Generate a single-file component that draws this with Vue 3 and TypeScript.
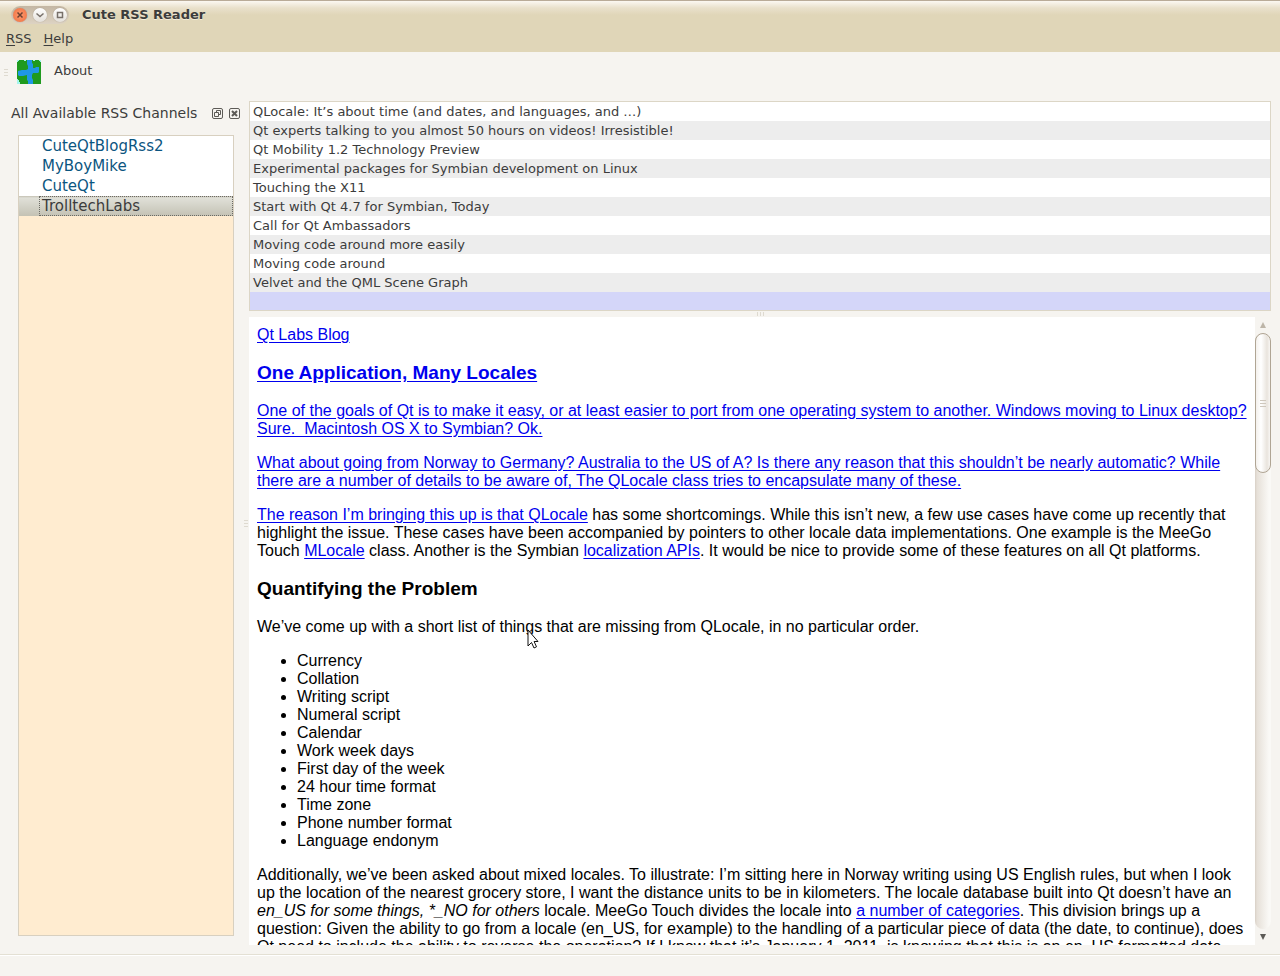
<script setup lang="ts">
import { ref } from 'vue'

const channels: string[] = ['CuteQtBlogRss2', 'MyBoyMike', 'CuteQt', 'TrolltechLabs']
const selectedChannel = ref<string>('TrolltechLabs')

const headlines: string[] = [
  'QLocale: It’s about time (and dates, and languages, and …)',
  'Qt experts talking to you almost 50 hours on videos! Irresistible!',
  'Qt Mobility 1.2 Technology Preview',
  'Experimental packages for Symbian development on Linux',
  'Touching the X11',
  'Start with Qt 4.7 for Symbian, Today',
  'Call for Qt Ambassadors',
  'Moving code around more easily',
  'Moving code around',
  'Velvet and the QML Scene Graph',
]

const missing: string[] = [
  'Currency',
  'Collation',
  'Writing script',
  'Numeral script',
  'Calendar',
  'Work week days',
  'First day of the week',
  '24 hour time format',
  'Time zone',
  'Phone number format',
  'Language endonym',
]
</script>

<template>
  <div class="window">
    <header class="titlebar">
      <div class="controls">
        <button class="control close" aria-label="Close">
          <svg viewBox="0 0 14 14"><path d="M4.500 4.500l5 5M9.500 4.500l-5 5" /></svg>
        </button>
        <button class="control" aria-label="Minimize">
          <svg viewBox="0 0 14 14"><path d="M3.500 5.500L7 8.500l3.500-3" /></svg>
        </button>
        <button class="control" aria-label="Maximize">
          <svg viewBox="0 0 14 14"><path d="M4.500 4.500h5v5h-5z" /></svg>
        </button>
      </div>
      <h1 class="title">Cute RSS Reader</h1>
    </header>

    <nav class="menubar">
      <button class="menu"><u>R</u>SS</button>
      <button class="menu"><u>H</u>elp</button>
    </nav>

    <div class="toolbar">
      <span class="grip rows"><i></i><i></i><i></i></span>
      <button class="tool">
        <svg class="logo" viewBox="0 0 24 24" aria-hidden="true">
          <path fill="#1f9a1f" d="M0 0h24v24H0z" />
          <path fill="#a5f5ec" d="M0 0h2v1H1v1H0zM7 0h2v1H7zM16 0h2v1h-2zM22 0h2v2h-1V1h-1zM0 19h1v1h1v2h1v2H0z" />
          <path fill="#1f97e6" d="M10 0h5v3l1 1v4h2l1-1h3v5l-1 1h-5l-1 2v3l1 2v4h-5v-3l-1-1v-5l-4 1H2l-1-1v-4l4-1h4l2-1V6l-1-2z" />
        </svg>
        <span>About</span>
      </button>
    </div>

    <main class="workspace">
      <aside class="dock">
        <div class="dock-head">
          <h2 class="dock-title">All Available RSS Channels</h2>
          <button class="dock-button" aria-label="Float">
            <svg viewBox="0 0 11 11">
              <rect x="0.500" y="0.500" width="10" height="10" rx="1.500" />
              <path d="M4.500 4.500v-2h4v4h-2M2.500 4.500h4v4h-4z" />
            </svg>
          </button>
          <button class="dock-button" aria-label="Close panel">
            <svg viewBox="0 0 11 11">
              <rect x="0.500" y="0.500" width="10" height="10" rx="1.500" />
              <path class="cross" d="M3 3l5 5M8 3L3 8" />
            </svg>
          </button>
        </div>
        <ul class="channels">
          <li v-for="name in channels" :key="name">
            <button
              class="channel"
              :class="{ selected: name === selectedChannel }"
              @click="selectedChannel = name"
            ><span>{{ name }}</span></button>
          </li>
        </ul>
      </aside>

      <div class="splitter-v"><span class="grip rows"><i></i><i></i><i></i></span></div>

      <section class="content">
        <ul class="headlines">
          <li v-for="title in headlines" :key="title">{{ title }}</li>
          <li class="current"></li>
        </ul>

        <div class="splitter-h"><span class="grip"><i></i><i></i><i></i></span></div>

        <div class="viewer">
          <article class="article">
            <a href="#">Qt Labs Blog</a>
            <h3><a href="#">One Application, Many Locales</a></h3>
            <p><a href="#">One of the goals of Qt is to make it easy, or at least easier to port from one operating system to another. Windows moving to Linux desktop? Sure.&nbsp; Macintosh OS X to Symbian? Ok.</a></p>
            <p><a href="#">What about going from Norway to Germany? Australia to the US of A? Is there any reason that this shouldn’t be nearly automatic? While there are a number of details to be aware of, The QLocale class tries to encapsulate many of these.</a></p>
            <p><a href="#">The reason I’m bringing this up is that QLocale</a> has some shortcomings. While this isn’t new, a few use cases have come up recently that highlight the issue. These cases have been accompanied by pointers to other locale data implementations. One example is the MeeGo Touch <a href="#">MLocale</a> class. Another is the Symbian <a href="#">localization APIs</a>. It would be nice to provide some of these features on all Qt platforms.</p>
            <h3>Quantifying the Problem</h3>
            <p>We’ve come up with a short list of things that are missing from QLocale, in no particular order.</p>
            <ul class="missing">
              <li v-for="item in missing" :key="item">{{ item }}</li>
            </ul>
            <p>Additionally, we’ve been asked about mixed locales. To illustrate: I’m sitting here in Norway writing using US English rules, but when I look up the location of the nearest grocery store, I want the distance units to be in kilometers. The locale database built into Qt doesn’t have an <em>en_US for some things, *_NO for others</em> locale. MeeGo Touch divides the locale into <a href="#">a number of categories</a>. This division brings up a question: Given the ability to go from a locale (en_US, for example) to the handling of a particular piece of data (the date, to continue), does Qt need to include the ability to reverse the operation? If I know that it’s January 1, 2011, is knowing that this is an en_US formatted date</p>
          </article>
          <div class="scrollbar">
            <button class="arrow" aria-label="Scroll up">
              <svg viewBox="0 0 6 6"><path fill="#bdb5a8" d="M3 0l3 6H0z" /></svg>
            </button>
            <div class="track">
              <div class="thumb"><span class="grip rows"><i></i><i></i><i></i></span></div>
            </div>
            <button class="arrow" aria-label="Scroll down">
              <svg viewBox="0 0 6 6"><path fill="#5c5a56" d="M0 0h6L3 6z" /></svg>
            </button>
          </div>
          <svg class="pointer" viewBox="0 0 12 20" aria-hidden="true">
            <path d="M1 1v16l3.500-3.500 2.500 5.500 2.500-1.200-2.400-5.300H11z" />
          </svg>
        </div>
      </section>
    </main>

    <footer class="statusbar"></footer>
  </div>
</template>

<style>
body {
  margin: 0;
}
</style>

<style scoped>
.window {
  display: flex;
  flex-direction: column;
  height: 100vh;
  overflow: hidden;
  background: #f6f4f0;
  color: #3c3c3c;
  font-family: "DejaVu Sans", sans-serif;
  font-size: 13px;
}
button {
  border: 0;
  padding: 0;
  margin: 0;
  background: none;
  color: inherit;
  font: inherit;
}
ul {
  list-style: none;
  margin: 0;
  padding: 0;
}
svg {
  display: block;
}
.titlebar {
  display: flex;
  align-items: center;
  flex: none;
  height: 28px;
  box-sizing: border-box;
  padding-left: 11px;
  gap: 13px;
  border-top: 1px solid #b9ab98;
  background: linear-gradient(#fbf8f2, #e9e0cb 7px, #e0d6b8 14px, #e0d6b8);
}
.controls {
  display: flex;
  align-items: center;
  gap: 6px;
  height: 18px;
  padding: 0 2px;
  border-radius: 9px;
  background: linear-gradient(#c4b7a3, #ddd3c3);
}
.control {
  width: 14px;
  height: 14px;
  border-radius: 50%;
  background: linear-gradient(#ffffff, #e4e0da);
  box-shadow: 0 0 1px #8b8172;
}
.control.close {
  background: radial-gradient(#ff9c70, #ee6c3c);
}
.control path {
  fill: none;
  stroke: #77706a;
  stroke-width: 1.500;
}
.control.close path {
  stroke: #6d4030;
}
.title {
  margin: 0;
  font: bold 13px/20px "DejaVu Sans", sans-serif;
  text-shadow: 0 1px 0 #f3ecd8;
}
.menubar {
  display: flex;
  align-items: flex-start;
  flex: none;
  gap: 12px;
  height: 24px;
  padding-left: 6px;
  background: #e0d6b8;
}
.menu {
  line-height: 22px;
}
.menu u {
  text-underline-offset: 2px;
}
.toolbar {
  display: flex;
  align-items: center;
  flex: none;
  height: 40px;
  padding-left: 4px;
  gap: 9px;
}
.tool {
  display: flex;
  align-items: center;
  gap: 13px;
  line-height: 18px;
}
.tool span {
  padding-bottom: 2px;
}
.logo {
  width: 24px;
  height: 24px;
}
.grip {
  display: flex;
  gap: 2px;
}
.grip i {
  width: 1px;
  height: 4px;
  background: #dedad0;
}
.grip.rows {
  flex-direction: column;
}
.grip.rows i {
  width: 4px;
  height: 1px;
}
.workspace {
  display: flex;
  flex: 1;
  min-height: 0;
  padding: 9px 9px 9px 11px;
}
.dock {
  display: flex;
  flex-direction: column;
  width: 231px;
}
.dock-head {
  display: flex;
  align-items: center;
  gap: 6px;
  height: 24px;
  margin-bottom: 10px;
  padding-right: 2px;
}
.dock-title {
  flex: 1;
  margin: 0;
  font-weight: normal;
  font-size: 14px;
  white-space: nowrap;
}
.dock-button svg {
  width: 11px;
  height: 11px;
  fill: none;
  stroke: #5d5b57;
}
.dock-button .cross {
  stroke-width: 2;
}
.channels {
  flex: 1;
  margin: 0 8px 9px 7px;
  border: 1px solid #d8d0c0;
  background: #ffecd0;
}
.channel {
  display: block;
  width: 100%;
  height: 20px;
  padding-left: 20px;
  background: #ffffff;
  color: #0b5580;
  font-size: 15px;
  text-align: left;
  line-height: 18px;
}
.channel span {
  display: block;
  border: 1px solid transparent;
  padding-left: 2px;
}
.channel.selected {
  background: linear-gradient(#c3c0b2, #e0e0d8 2px, #c4c2b4);
  color: #3c3c3c;
}
.channel.selected span {
  border: 1px dotted #6b6a64;
}
.splitter-v {
  display: flex;
  align-items: center;
  justify-content: center;
  width: 7px;
}
.content {
  display: flex;
  flex: 1;
  flex-direction: column;
  min-width: 0;
}
.headlines {
  flex: none;
  border: 1px solid #dcd6c6;
}
.headlines li {
  height: 19px;
  padding-left: 3px;
  background: #ffffff;
  line-height: 19px;
}
.headlines li:nth-child(even) {
  background: #ededed;
}
.headlines .current {
  height: 18px;
  background: #d4d6f9;
}
.splitter-h {
  display: flex;
  align-items: center;
  justify-content: center;
  flex: none;
  height: 6px;
}
.viewer {
  position: relative;
  display: flex;
  flex: 1;
  min-height: 0;
}
.article {
  flex: 1;
  min-width: 0;
  overflow: hidden;
  padding: 9px 8px 0;
  background: #ffffff;
  color: #000000;
  font: 16px/18px "Liberation Sans", sans-serif;
}
.article a {
  color: #0000ee;
  text-decoration: underline;
  text-underline-offset: 2px;
}
.article p {
  margin: 16px 0;
}
.article h3 {
  margin: 18px 0 19px;
  font-size: 19px;
  line-height: 21px;
}
.missing {
  list-style: disc;
  padding-left: 40px;
}
.scrollbar {
  display: flex;
  flex-direction: column;
  flex: none;
  width: 16px;
}
.arrow {
  display: flex;
  align-items: center;
  justify-content: center;
  height: 16px;
}
.arrow svg {
  width: 6px;
  height: 6px;
}
.track {
  flex: 1;
  border-radius: 8px;
  background: linear-gradient(90deg, #d8d0c6, #e6e0d8 2px, #faf9f6 14px);
}
.thumb {
  display: flex;
  align-items: center;
  justify-content: center;
  height: 140px;
  box-sizing: border-box;
  border: 1px solid #b0a594;
  border-radius: 8px;
  background: linear-gradient(90deg, #f4f1ed, #ffffff 5px, #e9e4dd 11px, #f8f6f3);
}
.thumb .grip i {
  width: 6px;
  background: #cfc8bd;
}
.pointer {
  position: absolute;
  left: 278px;
  top: 312px;
  width: 12px;
  height: 20px;
  fill: #ffffff;
  stroke: #111111;
}
.statusbar {
  flex: none;
  height: 21px;
  border-top: 1px solid #e4e0d4;
  box-shadow: inset 0 1px 0 #ffffff;
}
</style>
